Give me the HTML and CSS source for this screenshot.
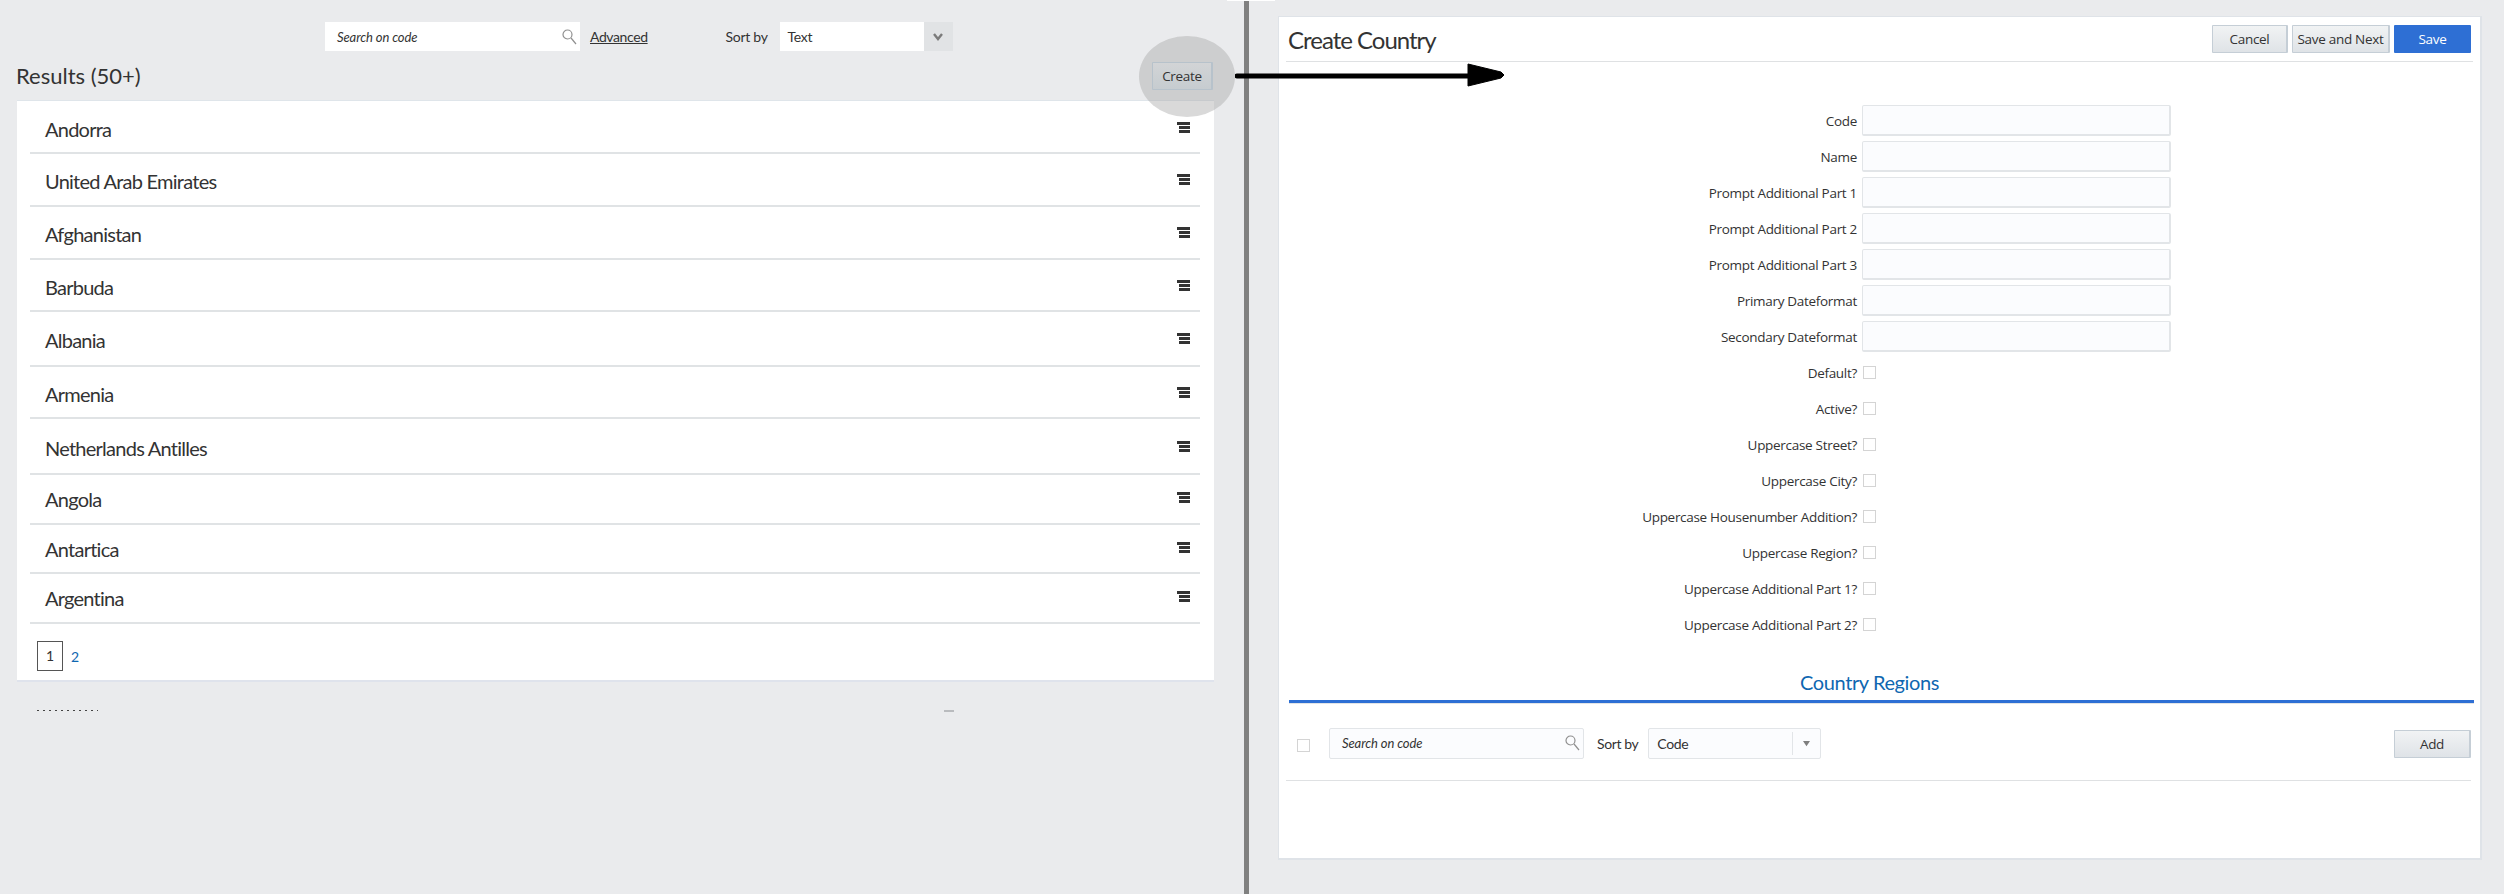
FILE: index.html
```html
<!DOCTYPE html>
<html lang="en">

<head>
  <meta charset="UTF-8">
  <title>Create Country</title>
  <link rel="stylesheet" href="styles.css">
</head>

<body>

  <main class="page">

    <section class="listPane">
      <div class="filterBar">
        <div class="searchBox">
          <span>Search on code</span>
          <svg class="searchIcon" viewBox="0 0 15 16"><circle cx="5.5" cy="5.5" r="4.5"/><path d="M9 9l5 6"/></svg>
        </div>
        <a class="advancedLink">Advanced</a>
        <span class="sortLabel">Sort by</span>
        <div class="sortSelect">
          <span class="sortValue">Text</span>
          <span class="sortArrow">
            <svg viewBox="0 0 10 8"><path d="M1 1l4 5 4-5"/></svg>
          </span>
        </div>
      </div>

      <div class="resultsHead">
        <h2>Results (50+)</h2>
        <button class="btn btnCreate">Create</button>
      </div>

      <div class="resultsCard">
        <div class="row row-52"><span>Andorra</span><i class="rowIcon"><b></b><b></b><b></b></i></div>
        <div class="row"><span>United Arab Emirates</span><i class="rowIcon"><b></b><b></b><b></b></i></div>
        <div class="row"><span>Afghanistan</span><i class="rowIcon"><b></b><b></b><b></b></i></div>
        <div class="row row-52"><span>Barbuda</span><i class="rowIcon"><b></b><b></b><b></b></i></div>
        <div class="row row-55"><span>Albania</span><i class="rowIcon"><b></b><b></b><b></b></i></div>
        <div class="row row-52"><span>Armenia</span><i class="rowIcon"><b></b><b></b><b></b></i></div>
        <div class="row row-56"><span>Netherlands Antilles</span><i class="rowIcon"><b></b><b></b><b></b></i></div>
        <div class="row row-50"><span>Angola</span><i class="rowIcon"><b></b><b></b><b></b></i></div>
        <div class="row row-49"><span>Antartica</span><i class="rowIcon"><b></b><b></b><b></b></i></div>
        <div class="row row-50"><span>Argentina</span><i class="rowIcon"><b></b><b></b><b></b></i></div>
        <div class="pager">
          <span class="pageCurrent">1</span>
          <a class="pageLink">2</a>
        </div>
      </div>

      <div class="cutOff">
        <span class="cutDots"></span>
        <span class="cutDash"></span>
      </div>
    </section>

    <div class="divider"></div>

    <section class="formPane">
      <div class="formCard">
        <header class="formHead">
          <h1>Create Country</h1>
          <div class="formActions">
            <button class="btn btnCancel">Cancel</button>
            <button class="btn btnNext">Save and Next</button>
            <button class="btn btnSave">Save</button>
          </div>
        </header>

        <div class="fields">
          <label class="field"><span>Code</span><input class="textInput" type="text"></label>
          <label class="field"><span>Name</span><input class="textInput" type="text"></label>
          <label class="field"><span>Prompt Additional Part 1</span><input class="textInput" type="text"></label>
          <label class="field"><span>Prompt Additional Part 2</span><input class="textInput" type="text"></label>
          <label class="field"><span>Prompt Additional Part 3</span><input class="textInput" type="text"></label>
          <label class="field"><span>Primary Dateformat</span><input class="textInput" type="text"></label>
          <label class="field"><span>Secondary Dateformat</span><input class="textInput" type="text"></label>
          <label class="field"><span>Default?</span><i class="check"></i></label>
          <label class="field"><span>Active?</span><i class="check"></i></label>
          <label class="field"><span>Uppercase Street?</span><i class="check"></i></label>
          <label class="field"><span>Uppercase City?</span><i class="check"></i></label>
          <label class="field"><span>Uppercase Housenumber Addition?</span><i class="check"></i></label>
          <label class="field"><span>Uppercase Region?</span><i class="check"></i></label>
          <label class="field"><span>Uppercase Additional Part 1?</span><i class="check"></i></label>
          <label class="field"><span>Uppercase Additional Part 2?</span><i class="check"></i></label>
        </div>

        <h3 class="tabTitle">Country Regions</h3>
        <div class="tabLine"></div>

        <div class="regionBar">
          <i class="check regionCheck"></i>
          <div class="searchBox regionSearch">
            <span>Search on code</span>
            <svg class="searchIcon" viewBox="0 0 15 16"><circle cx="5.5" cy="5.5" r="4.5"/><path d="M9 9l5 6"/></svg>
          </div>
          <span class="regionSortLabel">Sort by</span>
          <div class="regionSelect">
            <span class="regionValue">Code</span>
            <span class="regionArrowBox">
              <svg class="regionArrow" viewBox="0 0 10 8"><path d="M1 1h8L5 7z"/></svg>
            </span>
          </div>
          <button class="btn btnAdd">Add</button>
        </div>
      </div>
    </section>

    <!-- annotation drawn over the screenshot -->
    <div class="spotlight"></div>
    <svg class="flowArrow" viewBox="0 0 270 26">
      <path d="M2 13H236" />
      <polygon points="233,1 266,9 269,12 266,15 233,23" />
    </svg>
    <div class="topSliver"></div>

  </main>

</body>

</html>
```

FILE: styles.css
```css
body {
  margin: 0;
  font-family: "Open Sans", "Liberation Sans", sans-serif;
  font-size: 13.5px;
  letter-spacing: -0.3px;
  color: #333;
  background-color: #eaebed;
}

.page {
  position: relative;
  display: flex;
  width: 2504px;
  height: 894px;
  overflow: hidden;
}

h1, h2, h3 {
  margin: 0;
  font-family: Lato, "Open Sans", sans-serif;
  font-weight: 400;
}

/* left side */

.listPane {
  width: 1244px;
  flex: none;
}

.filterBar {
  display: flex;
  align-items: center;
  height: 29px;
  padding: 22px 0 0 325px;
  font-family: Lato, sans-serif;
}

.searchBox {
  display: flex;
  align-items: center;
  justify-content: space-between;
  box-sizing: border-box;
  width: 255px;
  height: 29px;
  padding: 0 3px 0 12px;
  background-color: #fff;
  font-style: italic;
  font-size: 13px;
  letter-spacing: -0.1px;
}

.searchIcon {
  width: 15px;
  height: 16px;
  fill: none;
  stroke: #8f8f8f;
  stroke-width: 1.2;
}

.advancedLink {
  margin-left: 10px;
  text-decoration: underline;
  font-size: 14px;
  letter-spacing: -0.4px;
}

.sortLabel {
  margin-left: 78px;
  font-size: 14px;
  letter-spacing: -0.3px;
}

.sortSelect {
  display: flex;
  align-items: stretch;
  height: 29px;
  margin-left: 12px;
}

.sortValue {
  width: 136px;
  padding-left: 8px;
  line-height: 29px;
  background-color: #fff;
  font-size: 14px;
}

.sortArrow {
  display: flex;
  align-items: center;
  justify-content: center;
  width: 29px;
  background-color: #e1e3e5;
}

.sortArrow svg {
  width: 10px;
  height: 8px;
  fill: none;
  stroke: #7b7b7b;
  stroke-width: 2.4;
}

.resultsHead {
  display: flex;
  align-items: center;
  justify-content: space-between;
  height: 49px;
  padding-left: 16px;
  padding-right: 31px;
}

.resultsHead h2 {
  font-size: 22px;
  letter-spacing: 0;
}

.btn {
  box-sizing: border-box;
  height: 28px;
  padding: 0;
  border: 1px solid #c5ced6;
  border-right-width: 2px;
  border-radius: 1px;
  background: linear-gradient(#f1f3f4, #dfe3e7);
  color: #333;
  font-family: "Open Sans", sans-serif;
  font-size: 13.5px;
  letter-spacing: -0.3px;
}

/* sits over the spotlight, so it carries the dimmed colours itself */
.btnCreate {
  position: relative;
  z-index: 1;
  width: 61px;
  border-color: #b7c2cb;
  background: linear-gradient(#d2d4d6, #c6ccd0);
}

.resultsCard {
  box-sizing: border-box;
  width: 1197px;
  height: 582px;
  margin-left: 17px;
  padding: 1px 14px 0 13px;
  background-color: #fff;
  border-top: 1px solid #dfe5ea;
  border-bottom: 2px solid #dfe3ec;
  font-family: Lato, sans-serif;
}

.row {
  display: flex;
  align-items: center;
  justify-content: space-between;
  box-sizing: border-box;
  height: 53px;
  padding: 3px 10px 0 15px;
  border-bottom: 2px solid #e0e3e5;
  font-size: 20px;
  letter-spacing: -0.75px;
}

.row-49 { height: 49px; padding-top: 0; }
.row-50 { height: 50px; padding-top: 0; }
.row-52 { height: 52px; }
.row-55 { height: 55px; }
.row-56 { height: 56px; }

.rowIcon {
  display: flex;
  flex-direction: column;
  align-items: flex-end;
  gap: 1px;
  width: 13px;
  margin-top: -3px;
}

.rowIcon b {
  display: block;
  width: 11px;
  height: 3px;
  background-color: #333;
}

.rowIcon b:first-child {
  width: 13px;
}

.pager {
  display: flex;
  align-items: flex-end;
  gap: 8px;
  padding: 17px 0 0 7px;
  font-size: 14px;
}

.pageCurrent {
  box-sizing: border-box;
  width: 26px;
  height: 30px;
  line-height: 28px;
  text-align: center;
  border: 1px solid #555;
}

.pageLink {
  line-height: 28px;
  color: #0f67b1;
}

.cutOff {
  display: flex;
  align-items: center;
  height: 1px;
  margin-top: 28px;
  padding-left: 37px;
}

.cutDots {
  width: 61px;
  height: 1px;
  background-image: repeating-linear-gradient(90deg, #444 0 2px, transparent 2px 6px);
}

.cutDash {
  width: 10px;
  height: 2px;
  margin-left: 846px;
  background-color: #b9bbbe;
}

.divider {
  width: 5px;
  flex: none;
  background-color: #808080;
}

/* right side */

.formPane {
  flex: 1;
  padding: 16px 22px 34px 29px;
}

.formCard {
  box-sizing: border-box;
  height: 844px;
  padding: 0 7px;
  background-color: #fff;
  border: 1px solid #dfe3e8;
  border-bottom-width: 2px;
  border-right-width: 2px;
}

.formHead {
  display: flex;
  align-items: flex-start;
  justify-content: space-between;
  height: 44px;
  border-bottom: 1px solid #dfe1e3;
  padding-left: 2px;
}

.formHead h1 {
  padding-top: 8px;
  font-size: 24px;
  line-height: 30px;
  letter-spacing: -1px;
}

.formActions {
  display: flex;
  gap: 4px;
  padding-top: 8px;
  padding-right: 2px;
}

.btnCancel { width: 76px; }
.btnNext { width: 98px; }

.btnSave {
  width: 77px;
  border: 0;
  background: #2e6fd4;
  color: #fff;
}

.fields {
  display: flex;
  flex-direction: column;
  gap: 5px;
  padding-top: 43px;
}

.field {
  display: flex;
  align-items: center;
  gap: 5px;
  height: 31px;
}

.field > span {
  width: 571px;
  text-align: right;
}

.textInput {
  box-sizing: border-box;
  width: 309px;
  height: 31px;
  margin: 0;
  background-color: #fbfcfe;
  border: 1px solid #e2e5e8;
  border-width: 1px 2px 2px 1px;
  border-radius: 2px;
}

.check {
  display: block;
  box-sizing: border-box;
  width: 13px;
  height: 13px;
  margin-left: 1px;
  border: 1px solid #d4d4d4;
  background-color: #fff;
}

.tabTitle {
  padding-top: 28px;
  padding-right: 20px;
  text-align: center;
  color: #0f67b1;
  font-size: 20px;
  line-height: 28px;
  letter-spacing: -0.4px;
}

.tabLine {
  margin-top: 4px;
  margin-left: 3px;
  margin-right: -1px;
  height: 3px;
  background-color: #2e6fd4;
  border-bottom: 1px solid #e2e4e6;
}

.regionBar {
  display: flex;
  align-items: center;
  height: 74px;
  margin-right: 2px;
  padding-top: 2px;
  padding-left: 11px;
  border-bottom: 1px solid #dfe1e3;
}

.regionCheck {
  margin-left: 0;
  margin-top: 4px;
}

.regionSearch {
  margin-left: 19px;
  height: 31px;
  background-color: #fbfcfe;
  border: 1px solid #e2e5e8;
  border-radius: 2px;
  font-family: Lato, sans-serif;
}

.regionSortLabel {
  margin-left: 13px;
  font-family: Lato, sans-serif;
  font-size: 14px;
  letter-spacing: -0.4px;
}

.regionSelect {
  display: flex;
  align-items: center;
  box-sizing: border-box;
  width: 173px;
  height: 31px;
  margin-left: 10px;
  padding: 3px 0 3px 8px;
  background-color: #fbfcfe;
  border: 1px solid #e2e5e8;
  border-radius: 2px;
  font-family: Lato, sans-serif;
  font-size: 14px;
}

.regionValue {
  flex: 1;
}

.regionArrowBox {
  display: flex;
  align-items: center;
  justify-content: center;
  width: 27px;
  height: 100%;
  border-left: 1px solid #e2e5e8;
}

.regionArrow {
  width: 9px;
  height: 7px;
  fill: #7f7f7f;
}

.btnAdd {
  width: 77px;
  margin-left: auto;
  margin-top: 2px;
}

/* annotation */

.spotlight {
  position: absolute;
  left: 1139px;
  top: 36px;
  width: 96px;
  height: 81px;
  border-radius: 50%;
  background-color: rgba(167, 167, 167, 0.43);
}

.flowArrow {
  position: absolute;
  left: 1235px;
  top: 63px;
  width: 270px;
  height: 26px;
  fill: #000;
  stroke: #000;
}

.flowArrow path {
  stroke-width: 5;
  stroke-linecap: round;
  fill: none;
}

.flowArrow polygon {
  stroke-width: 1;
}

.topSliver {
  position: absolute;
  left: 1227px;
  top: 0;
  width: 48px;
  height: 1px;
  background-color: #fff;
}
```
